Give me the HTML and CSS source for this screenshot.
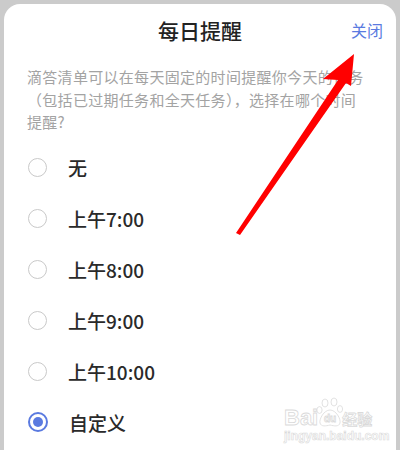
FILE: index.html
```html
<!DOCTYPE html>
<html lang="zh-CN">
<head>
  <meta charset="UTF-8">
  <title>每日提醒</title>
  <link rel="stylesheet" href="styles.css">
</head>
<body>
  <div class="sheet">
    <header class="sheet-head">
      <span></span>
      <h1 class="title">每日提醒</h1>
      <a class="close">关闭</a>
    </header>

    <p class="desc">滴答清单可以在每天固定的时间提醒你今天的任务（包括已过期任务和全天任务），选择在哪个时间提醒?</p>

    <ul class="options">
      <li class="option"><span class="radio"></span>无</li>
      <li class="option"><span class="radio"></span>上午7:00</li>
      <li class="option"><span class="radio"></span>上午8:00</li>
      <li class="option"><span class="radio"></span>上午9:00</li>
      <li class="option"><span class="radio"></span>上午10:00</li>
      <li class="option selected"><span class="radio"></span>自定义</li>
    </ul>
  </div>

  <!-- annotation arrow drawn over the screenshot -->
  <svg class="arrow" width="400" height="450" viewBox="0 0 400 450">
    <polygon points="354,54 323,79 338,80 236,233 240,235 346,83 351,86" fill="#ff0000"/>
  </svg>

  <div class="watermark">
    <div class="wm-top">
      <span class="wm-text">Bai</span>
      <svg class="paw" width="28" height="32" viewBox="0 0 28 32">
        <ellipse cx="9" cy="6" rx="3" ry="4" />
        <ellipse cx="18" cy="5" rx="3" ry="4" />
        <ellipse cx="3.5" cy="13" rx="2.6" ry="3.4" />
        <ellipse cx="24" cy="12" rx="2.6" ry="3.4" />
        <path d="M14 13 C 8 13, 3 22, 4 26 C 5 30, 10 29, 14 28 C 18 29, 23 30, 24 26 C 25 22, 20 13, 14 13 Z" />
        <text x="14" y="25" text-anchor="middle">du</text>
      </svg>
      <span class="wm-cn">经验</span>
    </div>
    <div class="wm-url">jingyan.baidu.com</div>
  </div>
</body>
</html>
```

FILE: styles.css
```css
body {
  margin: 0;
  background-color: #cbcbcb;
  font-family: "Noto Sans CJK SC", "Noto Sans", sans-serif;
  width: 400px;
  height: 450px;
  overflow: hidden;
  position: relative;
}

.sheet {
  margin: 4px 4px 0 4px;
  height: 446px;
  background-color: #ffffff;
  border-radius: 16px 16px 0 0;
}

.sheet-head {
  display: grid;
  grid-template-columns: 1fr auto 1fr;
  align-items: center;
  padding: 12px 13px 0 13px;
  height: 28px;
}

.title {
  margin: 0;
  font-size: 21px;
  font-weight: 500;
  line-height: 28px;
  color: #222222;
}

.close {
  justify-self: end;
  font-size: 16px;
  color: #5a7ae0;
}

.desc {
  margin: 0;
  padding: 22px 26px 0 23px;
  font-size: 15px;
  letter-spacing: 0.3px;
  line-height: 22.5px;
  color: #a3a3a3;
}

.options {
  list-style: none;
  margin: 8px 0 0 0;
  padding: 0 0 0 24px;
}

.option {
  display: flex;
  align-items: center;
  gap: 21px;
  height: 51px;
  font-size: 19px;
  font-weight: 500;
  color: #2a2a2a;
}

.radio {
  width: 17px;
  height: 17px;
  border: 1.5px solid #c9c9c9;
  border-radius: 50%;
  display: flex;
  align-items: center;
  justify-content: center;
}

.selected .radio {
  border: 2px solid #5a7ae0;
  width: 16px;
  height: 16px;
}

.selected .radio::after {
  content: "";
  width: 10px;
  height: 10px;
  border-radius: 50%;
  background-color: #5a7ae0;
}

.arrow {
  position: absolute;
  left: 0;
  top: 0;
  pointer-events: none;
}

/* faint stamp in the bottom right corner */
.watermark {
  position: absolute;
  left: 284px;
  top: 396px;
  white-space: nowrap;
  color: #ffffff;
  -webkit-text-stroke: 0.8px #dadada;
}

.wm-top {
  display: flex;
  align-items: flex-end;
  height: 33px;
}

.wm-text {
  font-family: "Liberation Sans", Arial, sans-serif;
  font-size: 22px;
  font-weight: bold;
  line-height: 22px;
}

.paw {
  flex-shrink: 0;
  margin: 0 -2px;
  fill: #ffffff;
  stroke: #dadada;
  stroke-width: 0.8;
}

.paw text {
  font-family: "Liberation Sans", Arial, sans-serif;
  font-size: 10px;
  font-weight: bold;
}

.wm-cn {
  font-family: "Noto Sans CJK SC", sans-serif;
  font-size: 15px;
  font-weight: bold;
  line-height: 20px;
}

.wm-url {
  font-family: "Liberation Sans", Arial, sans-serif;
  font-size: 12px;
  font-weight: bold;
  line-height: 14px;
  -webkit-text-stroke: 0.6px #dadada;
}
```
